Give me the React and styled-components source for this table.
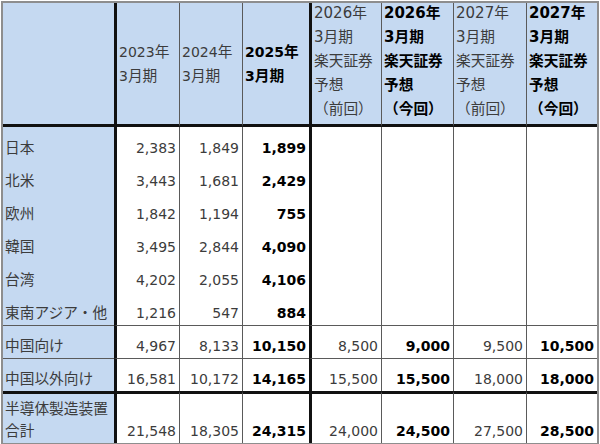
import styled, { createGlobalStyle } from 'styled-components';

const GlobalStyle = createGlobalStyle`
  html, body {
    margin: 0;
    padding: 0;
    background: #ffffff;
  }
  body {
    font-family: "DejaVu Sans", "Noto Sans CJK JP", sans-serif;
    font-size: 14px;
    color: #3c3c3c;
  }
`;

const Sheet = styled.div`
  display: grid;
  grid-template-columns: 111px 65px 63px 67px 72px 72px 73px 71px;
  grid-template-rows: 124px repeat(8, 33px) 52px;
  width: 594px;
  margin: 1px;
  border: 2px solid #8e8e8e;
  background: #ffffff;
`;

const lineFor = (kind) => {
  if (kind === 'thick') return '3px solid #111111';
  if (kind === 'thin') return '1px solid #5a5a5a';
  return 'none';
};

const Cell = styled.div`
  box-sizing: border-box;
  border-left: ${({ $left }) => lineFor($left)};
  border-top: ${({ $top }) => lineFor($top)};
  min-width: 0;
  overflow: hidden;
`;

const HeadCell = styled(Cell)`
  background: #c5d9f1;
  border-bottom: 3px solid #111111;
  display: flex;
  flex-direction: column;
  justify-content: center;
  padding: 0 0 ${({ $tall }) => ($tall ? '5px' : '0')} 2px;
  font-size: ${({ $tall }) => ($tall ? '15px' : '14px')};
  line-height: 24px;
  white-space: nowrap;
  font-weight: ${({ $bold }) => ($bold ? 700 : 400)};
  color: ${({ $bold }) => ($bold ? '#000000' : '#3c3c3c')};
`;

const LabelCell = styled(Cell)`
  background: #c5d9f1;
  display: flex;
  flex-direction: column;
  justify-content: flex-end;
  padding: 0 0 1px 2px;
  line-height: 22px;
  white-space: nowrap;
`;

const NumCell = styled(Cell)`
  display: flex;
  align-items: flex-end;
  justify-content: flex-end;
  padding: 0 3px 1px 0;
  line-height: 22px;
  white-space: nowrap;
  font-weight: ${({ $bold }) => ($bold ? 700 : 400)};
  color: ${({ $bold }) => ($bold ? '#000000' : '#3c3c3c')};
`;

// Japanese glyphs in the sheet run a little larger than the Latin digits
const Ja = styled.span`
  font-size: 14.7px;
`;

const Line = styled.span`
  display: block;
`;

const Text = ({ children }) =>
  children.split(/([^\x00-\x7f]+)/).map((part, i) =>
    /[^\x00-\x7f]/.test(part) ? <Ja key={i}>{part}</Ja> : part
  );

const headers = [
  { lines: ['2023年', '3月期'] },
  { lines: ['2024年', '3月期'] },
  { lines: ['2025年', '3月期'], bold: true },
  { lines: ['2026年', '3月期', '楽天証券', '予想', '（前回）'] },
  { lines: ['2026年', '3月期', '楽天証券', '予想', '（今回）'], bold: true },
  { lines: ['2027年', '3月期', '楽天証券', '予想', '（前回）'] },
  { lines: ['2027年', '3月期', '楽天証券', '予想', '（今回）'], bold: true },
];

const rows = [
  { label: ['日本'], values: ['2,383', '1,849', '1,899', '', '', '', ''] },
  { label: ['北米'], values: ['3,443', '1,681', '2,429', '', '', '', ''] },
  { label: ['欧州'], values: ['1,842', '1,194', '755', '', '', '', ''] },
  { label: ['韓国'], values: ['3,495', '2,844', '4,090', '', '', '', ''] },
  { label: ['台湾'], values: ['4,202', '2,055', '4,106', '', '', '', ''] },
  { label: ['東南アジア・他'], values: ['1,216', '547', '884', '', '', '', ''] },
  { label: ['中国向け'], values: ['4,967', '8,133', '10,150', '8,500', '9,000', '9,500', '10,500'], top: 'thin' },
  { label: ['中国以外向け'], values: ['16,581', '10,172', '14,165', '15,500', '15,500', '18,000', '18,000'], top: 'thin' },
  { label: ['半導体製造装置', '合計'], values: ['21,548', '18,305', '24,315', '24,000', '24,500', '27,500', '28,500'], top: 'thick' },
];

const boldCols = [2, 4, 6];
const leftLine = (i) => (i === 0 || i === 3 ? 'thick' : 'thin');

const App = () => {
  return (
    <>
      <GlobalStyle />
      <Sheet>
        <HeadCell />
        {headers.map((h, i) => (
          <HeadCell key={i} $left={leftLine(i)} $bold={h.bold} $tall={h.lines.length > 2}>
            {h.lines.map((l) => (
              <Line key={l}>
                <Text>{l}</Text>
              </Line>
            ))}
          </HeadCell>
        ))}
        {rows.map((r) => [
          <LabelCell key={r.label[0]} $top={r.top}>
            {r.label.map((l) => (
              <Line key={l}>
                <Text>{l}</Text>
              </Line>
            ))}
          </LabelCell>,
          ...r.values.map((v, i) => (
            <NumCell
              key={r.label[0] + i}
              $left={leftLine(i)}
              $top={r.top}
              $bold={boldCols.includes(i)}
            >
              {v}
            </NumCell>
          )),
        ])}
      </Sheet>
    </>
  );
};

export default App;
